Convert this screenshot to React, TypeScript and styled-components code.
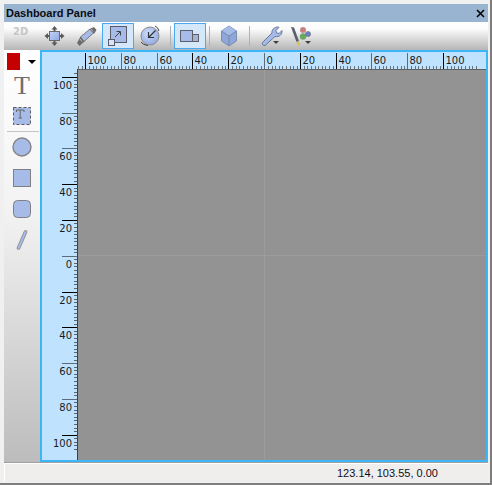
import React from "react";
import styled, { createGlobalStyle } from "styled-components";

const Global = createGlobalStyle`
  html, body { margin: 0; padding: 0; background: #f0f0f0; }
  #root { width: 492px; height: 485px; }
`;

const Window = styled.div`
  box-sizing: border-box;
  width: 492px;
  height: 485px;
  padding: 4px 2px 1px 4px;
  background: #f0f0f0;
  border-right: 2px solid #7e7e7e;
  border-bottom: 2px solid #7e7e7e;
  display: flex;
  flex-direction: column;
  font-family: "Liberation Sans", Arial, sans-serif;
`;

const TitleBar = styled.div`
  height: 18px;
  flex: none;
  background: #98b4d0;
  display: flex;
  align-items: center;
  justify-content: space-between;
  padding: 0 3px 0 2px;
  font-size: 11px;
  font-weight: bold;
  color: #0c0c14;
`;

const CloseIcon = styled.svg`
  width: 9px;
  height: 9px;
  display: block;
`;

const Toolbar = styled.div`
  height: 28px;
  flex: none;
  background: linear-gradient(#ffffff 0%, #fbfbfb 25%, #b6b6b6 100%);
  display: flex;
  align-items: flex-start;
`;

const TwoD = styled.div`
  width: 34px;
  height: 24px;
  display: flex;
  align-items: center;
  justify-content: flex-start;
  padding: 0 0 5px 9px;
  box-sizing: border-box;
  font-family: "DejaVu Sans", sans-serif;
  font-weight: bold;
  font-size: 10px;
  color: #c6c6c6;
`;

const ToolButton = styled.div<{ $active?: boolean }>`
  width: 32px;
  height: 26px;
  flex: none;
  box-sizing: border-box;
  display: flex;
  align-items: center;
  justify-content: center;
  margin-top: 1px;
  border: 1px solid ${(p) => (p.$active ? "#4aa8f4" : "transparent")};
  background: ${(p) => (p.$active ? "#d4e8fa" : "transparent")};
`;

const Separator = styled.div<{ $w: number }>`
  width: ${(p) => p.$w}px;
  height: 28px;
  flex: none;
  display: flex;
  justify-content: center;
  padding: 4px 0;
  box-sizing: border-box;
  &::before {
    content: "";
    width: 1px;
    background: #b0b0b0;
  }
`;

const Body = styled.div`
  flex: 1;
  display: flex;
  min-height: 0;
`;

const Sidebar = styled.div`
  width: 36px;
  flex: none;
  background: linear-gradient(#ffffff 0%, #f2f2f2 40%, #bcbcbc 100%);
  display: flex;
  flex-direction: column;
`;

const ColorRow = styled.div`
  height: 20px;
  flex: none;
  display: flex;
  align-items: flex-start;
  padding: 3px 0 0 3px;
  box-sizing: border-box;
`;

const Swatch = styled.div`
  width: 13px;
  height: 17px;
  background: #c40000;
`;

const Caret = styled.div`
  width: 0;
  height: 0;
  margin: 7px 0 0 8px;
  border-left: 4px solid transparent;
  border-right: 4px solid transparent;
  border-top: 4px solid #000;
`;

const SideSlot = styled.div<{ $h?: number }>`
  height: ${(p) => p.$h ?? 31}px;
  flex: none;
  display: flex;
  align-items: center;
  justify-content: center;
`;

const ShapeSlot = styled.div`
  height: 30px;
  flex: none;
  margin-bottom: 1px;
  display: flex;
  align-items: center;
  justify-content: center;
`;

const BigT = styled.span`
  font-family: "Liberation Serif", serif;
  font-size: 26px;
  line-height: 1;
  color: #6e6e6e;
`;

const SideRule = styled.div`
  height: 1px;
  flex: none;
  margin: 0 1px 0 3px;
  background: #c4c4c4;
`;

const CanvasFrame = styled.div`
  flex: 1;
  border: 2px solid #3cb6f6;
  display: grid;
  grid-template-columns: 36px 1fr;
  grid-template-rows: 18px 1fr;
  background: #bfe3ff;
  min-width: 0;
`;

const Corner = styled.div`
  background: #bfe3ff;
`;

const RulerSvg = styled.svg`
  display: block;
  font-family: "DejaVu Sans", sans-serif;
  font-size: 10px;
  fill: #1a1a1a;
`;

const Canvas = styled.div`
  background:
    linear-gradient(#9c9c9c, #9c9c9c) 186px 0 / 1px 100% no-repeat,
    linear-gradient(#9c9c9c, #9c9c9c) 0 185px / 100% 1px no-repeat,
    #939393;
  border-left: 1px solid #404040;
  border-top: 1px solid #606060;
  margin-left: -1px;
  margin-top: -1px;
`;

const StatusBar = styled.div`
  height: 20px;
  flex: none;
  box-sizing: border-box;
  border-top: 1px solid #a0a0a0;
  box-shadow: inset 1px 1px 0 #fff;
  background: #f0eded;
  display: flex;
  align-items: center;
  font-size: 11px;
  color: #10101c;
  padding-left: 333px;
`;

const STEP = 35.8 / 20;
const FRAME_LEFT = 78;

const majorColor = (v: number) => ([100, 40, 20].includes(Math.abs(v)) ? "#000" : "#5d6b78");
const majors = [-100, -80, -60, -40, -20, 0, 20, 40, 60, 80, 100];

function TopRuler() {
  const w = 444 - 36;
  const ticks: React.ReactNode[] = [];
  for (let v = -104; v <= 118; v += 2) {
    const x = Math.round(264.5 + v * STEP - FRAME_LEFT) + 0.5;
    if (v % 20 !== 0) ticks.push(<line key={v} x1={x} x2={x} y1={14} y2={17} stroke="#6c747c" />);
  }
  return (
    <RulerSvg width={w} height={18}>
      {ticks}
      <line x1={0} x2={w} y1={17.5} y2={17.5} stroke="#606060" />
      {majors.map((v) => {
        const x = Math.round(264 + v * STEP - FRAME_LEFT) + 0.5;
        return (
          <g key={v}>
            <line x1={x} x2={x} y1={1} y2={17} stroke={majorColor(v)} />
            <text x={x + 2} y={12}>{Math.abs(v)}</text>
          </g>
        );
      })}
    </RulerSvg>
  );
}

function LeftRuler() {
  const h = 390;
  const ticks: React.ReactNode[] = [];
  for (let v = -102; v <= 108; v += 2) {
    const y = Math.round(255.7 + v * STEP - 70) + 0.5;
    if (v % 20 !== 0 && y > 0) ticks.push(<line key={v} x1={32} x2={36} y1={y} y2={y} stroke="#5c646c" />);
  }
  return (
    <RulerSvg width={36} height={h}>
      {ticks}
      <line x1={35.5} x2={35.5} y1={0} y2={h} stroke="#505050" />
      {majors.map((v) => {
        const y = Math.round(255.7 + v * STEP - 70) + 0.5;
        return (
          <g key={v}>
            <line x1={20} x2={36} y1={y} y2={y} stroke={majorColor(v)} />
            <text x={30} y={y + 11} textAnchor="end">{Math.abs(v)}</text>
          </g>
        );
      })}
    </RulerSvg>
  );
}

const F = "#a6bbe8";
const S = "#6a6a6a";

const MoveIcon = () => (
  <svg width="30" height="24" viewBox="0 0 30 24">
    <defs>
      <linearGradient id="blue" x1="0" y1="0" x2="1" y2="1">
        <stop offset="0" stopColor="#c4d4f6" />
        <stop offset="1" stopColor="#8ea8e2" />
      </linearGradient>
    </defs>
    <path d="M15.500 2l3 3.500h-2v2h-2v-2h-2zM15.500 22l3-3.500h-2v-2h-2v2h-2zM5.500 12l3.500-3v2h2v2h-2v2zM25.500 12l-3.500-3v2h-2v2h2v2z" fill="#5a5a5a" />
    <rect x="10.500" y="7.500" width="10" height="9" fill="url(#blue)" stroke={S} />
  </svg>
);

const PencilIcon = () => (
  <svg width="30" height="24" viewBox="0 0 30 24">
    <path d="M9.500 13L19 5l3.500 4L13 17.500z" fill={F} stroke="#7a7a7a" />
    <path d="M6 19l3.500-6.500 4 5L8.500 22zM18.500 5L23 3l2.500 3-2.500 4z" fill="#6c6c6c" />
    <path d="M9 15l2 2.500M20 5l2 2.500" stroke="#bcbcbc" />
  </svg>
);

const ScaleIcon = () => (
  <svg width="20" height="22" viewBox="0 0 20 22">
    <rect x="2.500" y="1.500" width="16" height="16" fill={F} stroke="#5a5a6a" />
    <rect x="0.500" y="14.500" width="6" height="6" fill="#d8e4f8" stroke="#5a5a6a" />
    <path d="M7 12l5-5M8.500 6.500H12.500V10.500" fill="none" stroke="#404048" />
  </svg>
);

const OrbitIcon = () => (
  <svg width="24" height="24" viewBox="0 0 24 24">
    <defs>
      <radialGradient id="blue2" cx="0.4" cy="0.35" r="0.7">
        <stop offset="0" stopColor="#d0dcf8" />
        <stop offset="1" stopColor="#8ea8e2" />
      </radialGradient>
    </defs>
    <circle cx="12" cy="12" r="9" fill="url(#blue2)" stroke="#8a8a8a" />
    <path d="M17.500 6.500L11 13M10.500 8v5.500H16" fill="none" stroke="#303038" strokeWidth="1.200" />
    <path d="M3 18q2 3 7 3.500M17 2q3 1 4 5" fill="none" stroke="#404040" />
  </svg>
);

const ViewIcon = () => (
  <svg width="20" height="14" viewBox="0 0 20 14">
    <rect x="0.500" y="1.500" width="12" height="11" fill={F} stroke="#5e5e6a" />
    <rect x="12.500" y="5.500" width="6" height="7" fill="#a8b4cc" stroke="#5e5e6a" />
  </svg>
);

const CubeIcon = () => (
  <svg width="18" height="22" viewBox="0 0 18 22">
    <path d="M9 1l7.500 5v10L9 21l-7.500-5V6z" fill="#8ea6d8" stroke="#7e8ea8" />
    <path d="M9 1l7.500 5L9 11 1.500 6z" fill="#a6bce8" />
    <path d="M9 11v10M1.500 6L9 11l7.500-5" fill="none" stroke="#7388b4" />
  </svg>
);

const WrenchIcon = () => (
  <svg width="30" height="24" viewBox="0 0 30 24">
    <path
      d="M8.500 18.500L18 9C17.500 6 20 3 24 3L25 3.300L22 6.500L22.500 9L25 9.500L28 6.500C28.500 10 25.500 13.500 21 12.500L11 21.500C9 22 8 20.500 8.500 18.500Z"
      fill={F}
      stroke="#6a7898"
    />
    <path d="M19 17h6l-3 3z" fill="#404040" />
  </svg>
);

const PaletteIcon = () => (
  <svg width="30" height="24" viewBox="0 0 30 24">
    <path d="M5 3L8 3.500L13 17L10.500 18Z" fill="#56606e" />
    <path d="M10.500 18L13 17L14 21L12 21.500Z" fill="#d8c050" />
    <circle cx="17" cy="6" r="2.800" fill="#d87878" stroke="#999" strokeWidth="0.500" />
    <circle cx="17" cy="12.500" r="3" fill="#60b050" stroke="#888" strokeWidth="0.500" />
    <circle cx="22" cy="10" r="2.600" fill="#6a80c8" stroke="#666" strokeWidth="0.500" />
    <path d="M19 17h6l-3 3z" fill="#404040" />
  </svg>
);

const TextBoxIcon = () => (
  <svg width="18" height="18" viewBox="0 0 18 18">
    <rect x="0.500" y="0.500" width="17" height="17" fill={F} stroke="#5a5a5a" strokeDasharray="3 2" />
    <path d="M3.500 5V3H11V5M7.200 3V11M5.500 11H9" fill="none" stroke="#666" />
  </svg>
);

const CircleShape = () => (
  <svg width="20" height="20" viewBox="0 0 20 20">
    <circle cx="10" cy="10" r="9" fill={F} stroke="#848484" strokeWidth="1.400" />
  </svg>
);

const SquareShape = () => (
  <svg width="18" height="18" viewBox="0 0 18 18">
    <rect x="0.500" y="0.500" width="17" height="17" fill={F} stroke="#808080" />
  </svg>
);

const RoundShape = () => (
  <svg width="18" height="18" viewBox="0 0 18 18">
    <rect x="0.500" y="0.500" width="17" height="17" rx="4" fill={F} stroke="#808080" />
  </svg>
);

const LineShape = () => (
  <svg width="12" height="20" viewBox="0 0 12 20">
    <path d="M2.500 18L9.500 2" stroke="#888" strokeWidth="3.600" strokeLinecap="round" />
    <path d="M2.500 18L9.500 2" stroke={F} strokeWidth="2" strokeLinecap="round" />
  </svg>
);

export default function App() {
  return (
    <>
      <Global />
      <Window>
        <TitleBar>
          <span>Dashboard Panel</span>
          <CloseIcon viewBox="0 0 9 9">
            <path d="M1 1l7 7M8 1L1 8" stroke="#000" strokeWidth="1.600" />
          </CloseIcon>
        </TitleBar>
        <Toolbar>
          <TwoD>2D</TwoD>
          <ToolButton><MoveIcon /></ToolButton>
          <ToolButton><PencilIcon /></ToolButton>
          <ToolButton $active><ScaleIcon /></ToolButton>
          <ToolButton><OrbitIcon /></ToolButton>
          <Separator $w={8} />
          <ToolButton $active><ViewIcon /></ToolButton>
          <Separator $w={7} />
          <ToolButton><CubeIcon /></ToolButton>
          <Separator $w={8} />
          <ToolButton><WrenchIcon /></ToolButton>
          <ToolButton><PaletteIcon /></ToolButton>
        </Toolbar>
        <Body>
          <Sidebar>
            <ColorRow>
              <Swatch />
              <Caret />
            </ColorRow>
            <SideSlot><BigT>T</BigT></SideSlot>
            <SideSlot $h={30}><TextBoxIcon /></SideSlot>
            <SideRule />
            <ShapeSlot><CircleShape /></ShapeSlot>
            <ShapeSlot><SquareShape /></ShapeSlot>
            <ShapeSlot><RoundShape /></ShapeSlot>
            <ShapeSlot><LineShape /></ShapeSlot>
          </Sidebar>
          <CanvasFrame>
            <Corner />
            <TopRuler />
            <LeftRuler />
            <Canvas />
          </CanvasFrame>
        </Body>
        <StatusBar>123.14, 103.55, 0.00</StatusBar>
      </Window>
    </>
  );
}
